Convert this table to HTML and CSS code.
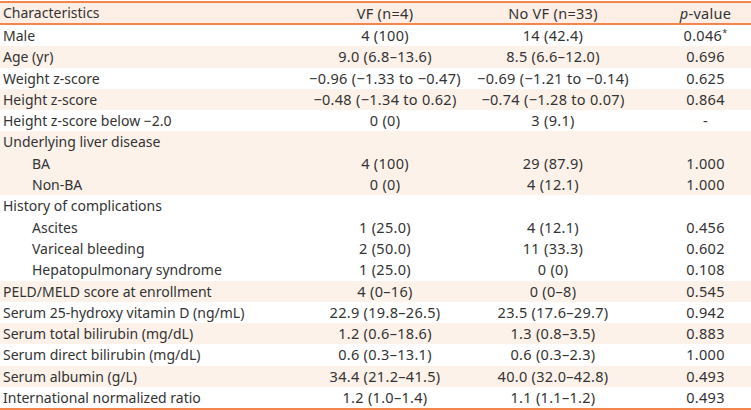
FILE: index.html
```html
<!DOCTYPE html>
<html>
<head>
<meta charset="utf-8">
<link rel="stylesheet" href="styles.css">
</head>
<body>
<table class="tbl">
  <colgroup>
    <col class="c1"><col class="c2"><col class="c3"><col class="c4">
  </colgroup>
  <thead>
    <tr><th class="lbl">Characteristics</th><th>VF (n=4)</th><th>No VF (n=33)</th><th class="pv"><i>p</i>-value</th></tr>
  </thead>
  <tbody>
    <tr><td class="lbl">Male</td><td>4 (100)</td><td>14 (42.4)</td><td class="pv">0.046<sup>*</sup></td></tr>
    <tr class="s"><td class="lbl">Age (yr)</td><td>9.0 (6.8–13.6)</td><td>8.5 (6.6–12.0)</td><td class="pv">0.696</td></tr>
    <tr><td class="lbl">Weight z-score</td><td>−0.96 (−1.33 to −0.47)</td><td>−0.69 (−1.21 to −0.14)</td><td class="pv">0.625</td></tr>
    <tr class="s"><td class="lbl">Height z-score</td><td>−0.48 (−1.34 to 0.62)</td><td>−0.74 (−1.28 to 0.07)</td><td class="pv">0.864</td></tr>
    <tr><td class="lbl">Height z-score below −2.0</td><td>0 (0)</td><td>3 (9.1)</td><td class="pv">-</td></tr>
    <tr class="s"><td class="lbl">Underlying liver disease</td><td></td><td></td><td class="pv"></td></tr>
    <tr class="s"><td class="lbl sub">BA</td><td>4 (100)</td><td>29 (87.9)</td><td class="pv">1.000</td></tr>
    <tr class="s"><td class="lbl sub">Non-BA</td><td>0 (0)</td><td>4 (12.1)</td><td class="pv">1.000</td></tr>
    <tr><td class="lbl">History of complications</td><td></td><td></td><td class="pv"></td></tr>
    <tr><td class="lbl sub">Ascites</td><td>1 (25.0)</td><td>4 (12.1)</td><td class="pv">0.456</td></tr>
    <tr><td class="lbl sub">Variceal bleeding</td><td>2 (50.0)</td><td>11 (33.3)</td><td class="pv">0.602</td></tr>
    <tr><td class="lbl sub">Hepatopulmonary syndrome</td><td>1 (25.0)</td><td>0 (0)</td><td class="pv">0.108</td></tr>
    <tr class="s"><td class="lbl">PELD/MELD score at enrollment</td><td>4 (0–16)</td><td>0 (0–8)</td><td class="pv">0.545</td></tr>
    <tr><td class="lbl">Serum 25-hydroxy vitamin D (ng/mL)</td><td>22.9 (19.8–26.5)</td><td>23.5 (17.6–29.7)</td><td class="pv">0.942</td></tr>
    <tr class="s"><td class="lbl">Serum total bilirubin (mg/dL)</td><td>1.2 (0.6–18.6)</td><td>1.3 (0.8–3.5)</td><td class="pv">0.883</td></tr>
    <tr><td class="lbl">Serum direct bilirubin (mg/dL)</td><td>0.6 (0.3–13.1)</td><td>0.6 (0.3–2.3)</td><td class="pv">1.000</td></tr>
    <tr class="s"><td class="lbl">Serum albumin (g/L)</td><td>34.4 (21.2–41.5)</td><td>40.0 (32.0–42.8)</td><td class="pv">0.493</td></tr>
    <tr><td class="lbl">International normalized ratio</td><td>1.2 (1.0–1.4)</td><td>1.1 (1.1–1.2)</td><td class="pv">0.493</td></tr>
  </tbody>
</table>
</body>
</html>
```
FILE: styles.css
```css
html, body {
  margin: 0;
  padding: 0;
  background: #ffffff;
}
body {
  padding-top: 1px;
  font-family: "Noto Sans", "Open Sans", sans-serif;
  font-size: 14.5px;
  letter-spacing: 0.3px;
  color: #333333;
}
.tbl {
  width: 751px;
  table-layout: fixed;
  border-collapse: collapse;
  border-top: 2px solid #f4854c;
  border-bottom: 2px solid #f4854c;
}
.c1 { width: 300px; }
.c2 { width: 170px; }
.c3 { width: 166px; }
.c4 { width: 115px; }
.tbl th, .tbl td {
  padding: 0;
  text-align: center;
  font-weight: normal;
  white-space: nowrap;
  line-height: 21.3px;
  height: 21.3px;
}
.tbl thead th {
  background: #fdefe6;
  border-bottom: 2px solid #f4854c;
  line-height: 20px;
  height: 20px;
}
.tbl .lbl {
  text-align: left;
  padding-left: 3px;
  font-size: 14px;
  letter-spacing: 0;
}
.tbl .sub {
  padding-left: 32px;
}
.tbl .pv {
  padding-left: 24px;
}
.s td {
  background: #fdf2ea;
}
sup {
  font-size: 9px;
  line-height: 0;
  vertical-align: 5px;
}
```
